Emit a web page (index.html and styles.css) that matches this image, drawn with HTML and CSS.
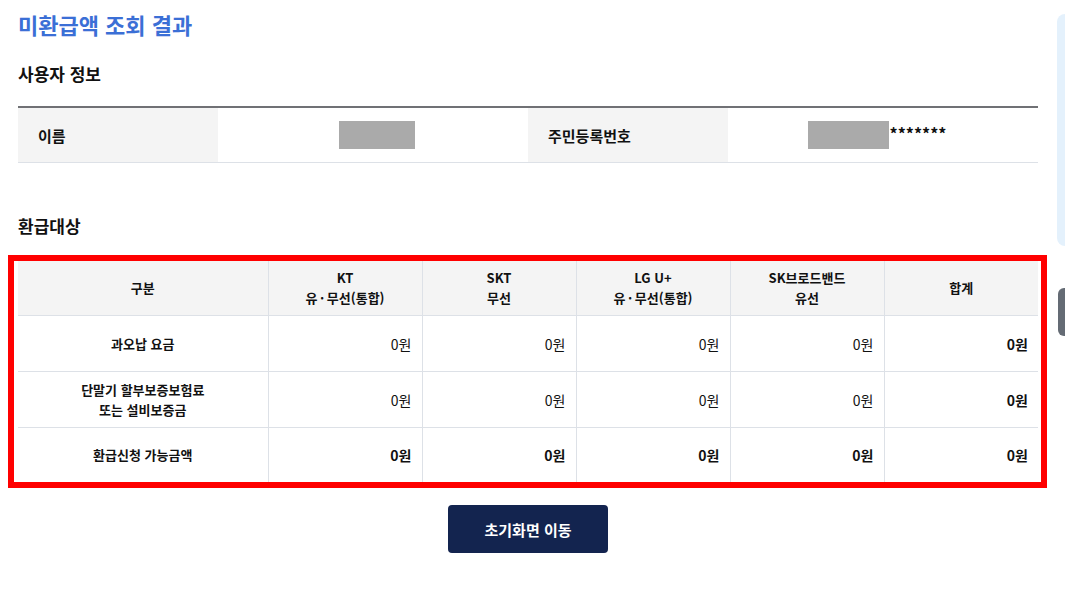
FILE: index.html
```html
<!DOCTYPE html>
<html lang="ko">
<head>
<meta charset="utf-8">
<title>미환급액 조회 결과</title>
<link rel="stylesheet" href="styles.css">
</head>
<body>
<main class="page">
  <h1 class="title">미환급액 조회 결과</h1>

  <h2 class="section-title section-user">사용자 정보</h2>
  <table class="info-table">
    <colgroup>
      <col class="c-label"><col class="c-value"><col class="c-label"><col class="c-value">
    </colgroup>
    <tr>
      <th>이름</th>
      <td><span class="mask mask-name"></span></td>
      <th>주민등록번호</th>
      <td><span class="mask mask-id"></span><span class="stars">*******</span></td>
    </tr>
  </table>

  <h2 class="section-title section-refund">환급대상</h2>
  <div class="highlight">
    <table class="refund-table">
      <colgroup>
        <col class="c-first"><col class="c-num"><col class="c-num"><col class="c-num"><col class="c-num"><col class="c-num">
      </colgroup>
      <thead>
        <tr class="head-row">
          <th>구분</th>
          <th>KT<br>유&thinsp;·&thinsp;무선(통합)</th>
          <th>SKT<br>무선</th>
          <th>LG U+<br>유&thinsp;·&thinsp;무선(통합)</th>
          <th>SK브로드밴드<br>유선</th>
          <th>합계</th>
        </tr>
      </thead>
      <tbody>
        <tr class="row-a">
          <th>과오납 요금</th>
          <td>0원</td><td>0원</td><td>0원</td><td>0원</td><td class="strong">0원</td>
        </tr>
        <tr class="row-b">
          <th>단말기 할부보증보험료<br>또는 설비보증금</th>
          <td>0원</td><td>0원</td><td>0원</td><td>0원</td><td class="strong">0원</td>
        </tr>
        <tr class="row-c">
          <th>환급신청 가능금액</th>
          <td class="strong">0원</td><td class="strong">0원</td><td class="strong">0원</td><td class="strong">0원</td><td class="strong">0원</td>
        </tr>
      </tbody>
    </table>
  </div>

  <div class="actions">
    <button class="btn-home" type="button">초기화면 이동</button>
  </div>
</main>

<div class="side-panel"></div>
<div class="side-handle"></div>
</body>
</html>
```

FILE: styles.css
```css
html, body {
  margin: 0;
  padding: 0;
  background: #ffffff;
}

body {
  font-family: "Noto Sans CJK KR", "Noto Sans", sans-serif;
  color: #111111;
  overflow: hidden;
}

.page {
  width: 1020px;
  padding: 8px 18px 0 18px;
}

.title {
  margin: 0;
  font-size: 22px;
  line-height: 32px;
  font-weight: 700;
  color: #3b6fd6;
}

.section-title {
  margin: 0;
  font-size: 17px;
  line-height: 26px;
  font-weight: 700;
  color: #111111;
}

.section-user {
  margin-top: 21px;
  margin-bottom: 19px;
}

.section-refund {
  margin-top: 50px;
  margin-bottom: 16px;
}

/* user info table */
.info-table {
  width: 1020px;
  border-collapse: collapse;
  table-layout: fixed;
  border-top: 2px solid #707175;
}

.info-table .c-label { width: 200px; }
.info-table .c-value { width: 310px; }

.info-table th,
.info-table td {
  height: 54px;
  padding: 0;
  border-bottom: 1px solid #dde1e7;
  font-size: 15px;
  vertical-align: middle;
}

.info-table th {
  background: #f4f4f4;
  text-align: left;
  padding-left: 20px;
  font-weight: 700;
}

.info-table td {
  text-align: center;
}

.mask {
  display: inline-block;
  height: 28px;
  background: #aaaaaa;
  vertical-align: middle;
}

.mask-name { width: 76px; margin-left: 8px; }
.mask-id { width: 81px; }

.stars {
  display: inline-block;
  vertical-align: middle;
  font-size: 16px;
  font-weight: 700;
  line-height: 28px;
  padding-bottom: 4px;
  margin-left: 1px;
  margin-right: 12px;
}

/* highlight box */
.highlight {
  margin: 0 -9px 0 -10px;
  border: 6px solid #ff0000;
  padding: 0 3px 0 4px;
}

.refund-table {
  width: 1020px;
  border-collapse: collapse;
  table-layout: fixed;
}

.refund-table .c-first { width: 250px; }
.refund-table .c-num { width: 154px; }

.refund-table th,
.refund-table td {
  padding: 0;
  font-size: 13px;
  line-height: 20px;
  border-left: 1px solid #dde1e7;
  border-bottom: 1px solid #dde1e7;
  vertical-align: middle;
}

.refund-table th:first-child {
  border-left: none;
}

.refund-table tbody tr:last-child th,
.refund-table tbody tr:last-child td {
  border-bottom: none;
}

.refund-table thead th {
  background: #f4f4f4;
  font-weight: 700;
  text-align: center;
  height: 54px;
}

.refund-table tbody th {
  font-weight: 700;
  text-align: center;
}

.refund-table td {
  text-align: right;
  padding-right: 10px;
  font-size: 14px;
  font-weight: 400;
}

.refund-table td.strong {
  font-weight: 700;
  padding-right: 10px;
}

.row-a th, .row-a td { height: 55px; }
.row-b th, .row-b td { height: 55px; }
.row-c th, .row-c td { height: 54px; }

/* actions */
.actions {
  display: flex;
  justify-content: center;
  margin-top: 17px;
}

.btn-home {
  width: 160px;
  height: 48px;
  border: none;
  border-radius: 4px;
  background: #13244f;
  color: #ffffff;
  font-family: "Noto Sans CJK KR", "Noto Sans", sans-serif;
  font-size: 15px;
  font-weight: 700;
  cursor: pointer;
}

/* partially visible side elements at right edge */
.side-panel {
  position: fixed;
  left: 1057px;
  top: 14px;
  width: 24px;
  height: 232px;
  border-radius: 8px;
  background: #e4f1fc;
}

.side-handle {
  position: fixed;
  left: 1058px;
  top: 288px;
  width: 24px;
  height: 48px;
  border-radius: 6px;
  background: #646b74;
}
```
